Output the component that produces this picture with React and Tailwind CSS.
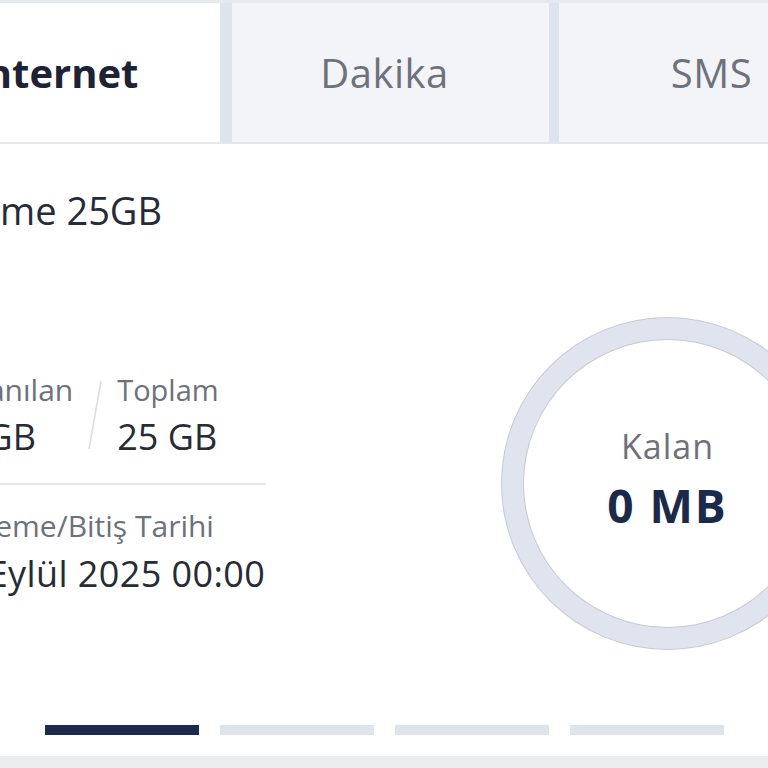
import React from "react";

const tabs = ["İnternet", "Dakika", "SMS"];

function Tab({ label, active, className }) {
  return (
    <div
      className={
        "h-full flex items-center justify-center pr-[12px] shrink-0 " +
        (active ? "bg-white " : "bg-[#f3f4f7] ") +
        className
      }
    >
      <span
        className={
          "text-[40px] leading-[48px] " +
          (active ? "font-bold text-[#1e2235]" : "text-[#6c717c] tracking-[0.5px]")
        }
      >
        {label}
      </span>
    </div>
  );
}

function Ring() {
  return (
    <div className="w-[331px] h-[331px] rounded-full bg-[#dfe4ee] ring-1 ring-[#c5cbd6] p-[22px] shrink-0">
      <div className="w-full h-full rounded-full bg-white ring-1 ring-[#c5cbd6] flex flex-col items-center justify-center pb-[12px]">
        <span className="text-[34px] leading-[40px] tracking-[1px] text-[#6c717c]">Kalan</span>
        <span className="mt-[14px] text-[46px] leading-[50px] font-bold tracking-[2px] text-[#1b2a4a]">
          0 MB
        </span>
      </div>
    </div>
  );
}

export default function App() {
  return (
    <div
      className="w-[768px] h-[768px] overflow-hidden bg-[#ebedf1]"
      style={{ fontFamily: '"Open Sans", "Noto Sans", sans-serif' }}
    >
      <div className="w-[963px] -ml-[97px] pt-[3px] bg-[#e6e9ee]">
        {/* sekmeler */}
        <div className="flex h-[139px] bg-[#dfe4ec]">
          <Tab label={tabs[0]} active className="w-[317px]" />
          <Tab label={tabs[1]} className="w-[317px] ml-[12px]" />
          <Tab label={tabs[2]} className="w-[317px] ml-[10px]" />
        </div>
        <div className="h-[2px] bg-[#e3e6eb]" />

        <div className="bg-white px-[33px] pt-[44px] pb-[21px]">
          <h2 className="-ml-[8px] text-[38px] leading-[44px] text-[#262b3a]">Ekleme 25GB</h2>

          <div className="mt-[86px] flex items-center justify-between">
            <div className="w-[330px]">
              <div className="flex">
                <div className="flex flex-col">
                  <span className="text-[30px] leading-[36px] text-[#6c717c]">Kullanılan</span>
                  <span className="mt-[7px] text-[36px] leading-[44px] text-[#262b36]">25 GB</span>
                </div>
                <div className="w-[14px] mx-[15px] shrink-0">
                  <svg width="14" height="87" viewBox="0 0 14 87">
                    <line x1="13" y1="9" x2="1" y2="77" stroke="#dcdcdf" strokeWidth="1.5" />
                  </svg>
                </div>
                <div className="flex flex-col">
                  <span className="text-[29px] leading-[36px] text-[#6c717c]">Toplam</span>
                  <span className="mt-[7px] text-[36px] leading-[44px] text-[#262b36]">25 GB</span>
                </div>
              </div>

              <div className="h-[2px] bg-[#e6e6e8] mt-[24px] mb-[23px]" />

              <div className="flex flex-col">
                <span className="-ml-[8px] text-[30px] leading-[36px] text-[#6c717c]">
                  Yenileme/Bitiş Tarihi
                </span>
                <span className="mt-[8px] text-[36px] leading-[44px] tracking-[0.4px] text-[#262b36]">
                  30 Eylül 2025 00:00
                </span>
              </div>
            </div>

            <Ring />
          </div>

          {/* sayfa göstergesi */}
          <div className="mt-[76px] flex justify-center gap-[21px]">
            <div className="w-[154px] h-[10px] bg-[#1b2a4e]" />
            <div className="w-[154px] h-[10px] bg-[#dee3ec]" />
            <div className="w-[154px] h-[10px] bg-[#dee3ec]" />
            <div className="w-[154px] h-[10px] bg-[#dee3ec]" />
          </div>
        </div>
      </div>
    </div>
  );
}
